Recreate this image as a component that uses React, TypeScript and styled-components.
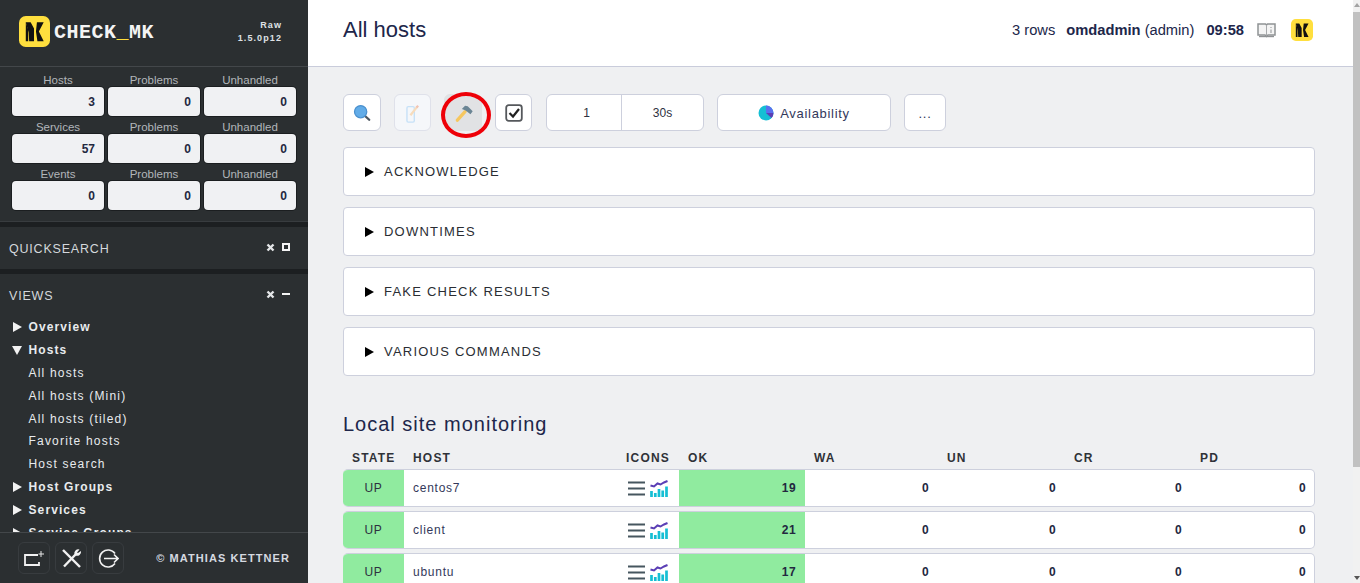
import React from "react"
import styled, { createGlobalStyle } from "styled-components"

const GlobalStyle = createGlobalStyle`
    html, body {
        margin: 0;
        height: 100%;
        overflow: hidden;
        font-family: "Liberation Sans", Arial, sans-serif;
    }
`

const Page = styled.div`
    display: flex;
    height: 100vh;
    overflow: hidden;
    background: #eff0f2;
`

/* sidebar */

const Sidebar = styled.aside`
    width: 308px;
    flex: none;
    display: flex;
    flex-direction: column;
    background: #2b2f31;
    color: #e6e8ea;
`

const LogoBar = styled.div`
    flex: none;
    display: flex;
    align-items: center;
    padding: 0 26px 3px 19px;
    box-sizing: border-box;
    height: 67px;
    border-bottom: 1px solid #43474a;
`

const LogoText = styled.div`
    margin-left: 4px;
    margin-top: 1px;
    font: bold 20px "Liberation Mono", monospace;
    letter-spacing: 0.5px;
    color: #f4f4f4;

    span {
        color: #ffdf3e;
    }
`

const Version = styled.div`
    margin-left: auto;
    text-align: right;
    font-size: 9px;
    font-weight: bold;
    letter-spacing: 1.1px;
    line-height: 13px;
    color: #dfe2e5;
`

const Stats = styled.div`
    display: grid;
    grid-template-columns: repeat(3, 92px);
    column-gap: 4px;
    padding: 2px 0 11px 12px;
    border-bottom: 1px solid #383c3f;
`

const StatCell = styled.div`
    text-align: center;
`

const StatLabel = styled.div`
    height: 18px;
    line-height: 22px;
    font-size: 11.5px;
    color: #b2b6ba;
`

const StatValue = styled.div`
    height: 29px;
    line-height: 31px;
    text-align: right;
    padding-right: 9px;
    background: #f0f1f3;
    border-radius: 4px;
    box-shadow: 0 0 0 1px #1b1e20;
    font-size: 12px;
    font-weight: bold;
    color: #23283f;
`

const Snapin = styled.div`
    flex: none;
    border-top: 5px solid #1c1f21;
`

const SnapinHead = styled.div`
    display: flex;
    align-items: center;
    justify-content: space-between;
    height: 42px;
    box-sizing: border-box;
    padding: 2px 18px 0 9px;
    font-size: 12.5px;
    letter-spacing: 0.8px;
    color: #d4d8dc;
`

const SnapinControls = styled.div`
    display: flex;
    align-items: center;
    gap: 7px;
    font-size: 0;
    margin-top: -4px;
`

const ViewsScroller = styled.div`
    flex: 1;
    min-height: 0;
    overflow: hidden;
    padding: 0 0 0 12px;
`

const NavItem = styled.div<{ $top?: boolean }>`
    display: flex;
    align-items: center;
    height: 22.8px;
    padding-left: ${p => (p.$top ? 0 : 16.5)}px;
    font-size: 12px;
    font-weight: ${p => (p.$top ? "bold" : "normal")};
    letter-spacing: ${p => (p.$top ? 1.1 : 1.2)}px;
    color: #e8ebee;
`

const Caret = styled.span<{ $open?: boolean }>`
    width: 0;
    height: 0;
    margin-right: 7px;
    ${p =>
        p.$open
            ? `
        border-left: 5px solid transparent;
        border-right: 5px solid transparent;
        border-top: 9px solid #f2f2f2;
        margin-right: 6.5px;
    `
            : `
        border-top: 5px solid transparent;
        border-bottom: 5px solid transparent;
        border-left: 9px solid #f2f2f2;
        margin-left: 1px;
        margin-right: 6.5px;
    `}
`

const SideFooter = styled.div`
    height: 50px;
    flex: none;
    display: flex;
    align-items: center;
    padding: 0 18px;
    border-top: 1px solid #43474a;
    background: #2b2f31;
`

const FooterButton = styled.div`
    width: 32px;
    height: 32px;
    box-sizing: border-box;
    display: flex;
    align-items: center;
    justify-content: center;
    margin-right: 5px;
    border: 1px solid #383c3f;
    border-radius: 6px;
`

const Copyright = styled.div`
    margin-left: auto;
    font-size: 11px;
    font-weight: bold;
    letter-spacing: 1.08px;
    color: #d5dae0;
`

/* main */

const Main = styled.main`
    flex: 1;
    min-width: 0;
    display: flex;
    flex-direction: column;
    overflow: hidden;
`

const Header = styled.header`
    height: 67px;
    box-sizing: border-box;
    flex: none;
    display: flex;
    align-items: center;
    padding: 0 40px 6px 35px;
    background: #fff;
    border-bottom: 1px solid #c9ccdb;
    color: #20264a;
`

const Title = styled.h1`
    margin: 0;
    font-size: 22px;
    font-weight: normal;
`

const HeaderInfo = styled.div<{ $gap: number; $push?: boolean }>`
    font-size: 14.7px;
    margin-left: ${p => (p.$push ? "auto" : `${p.$gap}px`)};

    b {
        font-weight: bold;
    }
`

const HeaderIcon = styled.div<{ $gap: number }>`
    display: flex;
    margin-left: ${p => p.$gap}px;
`

const Content = styled.div`
    padding: 27px 38px 0 35px;
`

const Toolbar = styled.div`
    display: flex;
    align-items: stretch;
    height: 37px;
    position: relative;
`

const ToolButton = styled.div<{ $width: number; $gap: number; $dim?: boolean; $pressed?: boolean }>`
    width: ${p => p.$width}px;
    margin-right: ${p => p.$gap}px;
    box-sizing: border-box;
    display: flex;
    align-items: center;
    justify-content: center;
    gap: 6px;
    background: ${p => (p.$pressed ? "#e1e2e4" : p.$dim ? "#f5f7fa" : "#fff")};
    border: 1px solid ${p => (p.$pressed ? "#e1e2e4" : p.$dim ? "#dfe1ea" : "#cdd0dd")};
    border-radius: 6px;
    font-size: 13px;
    letter-spacing: 0.7px;
    color: #33385a;
    padding-top: 1px;
`

const TimerGroup = styled.div`
    width: 158px;
    margin-right: 13px;
    box-sizing: border-box;
    display: flex;
    background: #fff;
    border: 1px solid #cdd0dd;
    border-radius: 6px;
    font-size: 12px;
    color: #2d3140;
`

const TimerCell = styled.div<{ $width: number; $nudge?: number }>`
    width: ${p => p.$width}px;
    box-sizing: border-box;
    padding-left: ${p => p.$nudge ?? 0}px;
    display: flex;
    align-items: center;
    justify-content: center;

    & + & {
        flex: 1;
        border-left: 1px solid #cdd0dd;
    }
`

const RedRing = styled.div`
    position: absolute;
    left: 98px;
    top: -2px;
    width: 50px;
    height: 46px;
    box-sizing: border-box;
    border: 4px solid #ee0008;
    border-radius: 50%;
`

const Accordions = styled.div`
    display: flex;
    flex-direction: column;
    gap: 11px;
    margin-top: 16px;
`

const Accordion = styled.div`
    height: 49px;
    box-sizing: border-box;
    display: flex;
    align-items: center;
    padding: 0 0 1px 21px;
    background: #fff;
    border: 1px solid #cdd0dd;
    border-radius: 4px;
    font-size: 13px;
    letter-spacing: 1.22px;
    color: #2a2d33;

    &::before {
        content: "";
        width: 0;
        height: 0;
        margin: 2px 10px 0 0;
        border-top: 5px solid transparent;
        border-bottom: 5px solid transparent;
        border-left: 9px solid #000;
    }
`

const SectionTitle = styled.h2`
    margin: 36px 0 0;
    height: 24px;
    line-height: 24px;
    font-size: 20px;
    font-weight: normal;
    letter-spacing: 1px;
    color: #20264a;
`

const columns = "61px 213px 62px 126px 133px 127px 126px 124px"

const TableHead = styled.div`
    display: grid;
    grid-template-columns: ${columns};
    margin-top: 11px;
    height: 22px;
    align-items: center;
    font-size: 12px;
    font-weight: bold;
    letter-spacing: 1.2px;
    color: #2f3238;

    span {
        padding-left: 9px;
    }
`

const Row = styled.div`
    display: grid;
    grid-template-columns: ${columns};
    height: 38px;
    margin-bottom: 4px;
    box-sizing: border-box;
    background: #fff;
    border: 1px solid #cdd0dd;
    border-left: none;
    border-radius: 5px;
    font-size: 12px;
    letter-spacing: 0.75px;
    color: #33385a;
    overflow: hidden;
`

const StateCell = styled.div`
    display: flex;
    align-items: center;
    justify-content: center;
    background: #90eb9f;
    margin: -1px 0;
    color: #2d3140;
`

const HostCell = styled.div`
    display: flex;
    align-items: center;
    padding-left: 9px;
`

const IconsCell = styled.div`
    display: flex;
    align-items: center;
    gap: 5px;
    padding-left: 11px;
`

const CountCell = styled.div<{ $ok?: boolean }>`
    display: flex;
    align-items: center;
    justify-content: flex-end;
    padding-right: 9px;
    font-weight: bold;
    letter-spacing: 0.4px;
    color: #23283f;
    ${p => p.$ok && "background: #90eb9f; margin: -1px 0;"}
`

/* fake browser scrollbar */

const ScrollTrack = styled.div`
    width: 7px;
    flex: none;
    display: flex;
    flex-direction: column;
    align-items: center;
    background: #f1f1f1;
`

const ScrollArrow = styled.div<{ $down?: boolean }>`
    width: 0;
    height: 0;
    margin: ${p => (p.$down ? "auto 0 3px" : "3px 0 3px")};
    border-left: 3.5px solid transparent;
    border-right: 3.5px solid transparent;
    ${p => (p.$down ? "border-top: 4px solid #555;" : "border-bottom: 4px solid #a3a3a3;")}
`

const ScrollThumb = styled.div`
    width: 100%;
    height: 455px;
    margin-top: 2px;
    background: #c1c1c1;
`

/* drawings */

const KLogo: React.FC<{ size: number }> = ({ size }) => (
    <svg width={size} height={size} viewBox="0 0 32 32">
        <rect width="32" height="32" rx="7" fill="#ffdf3e" />
        <path d="M7 6.5 H12 L15.5 13 V26 H10.5 L10 17 Z" fill="#111" />
        <path d="M7 6.5 L9.5 14 V26 H7 Z" fill="#111" />
        <path d="M18.5 6.5 H25.5 L20.5 16 L25.5 26 H19 L17.5 16 Z" fill="#111" />
    </svg>
)

const SearchIcon = () => (
    <svg width="18" height="18" viewBox="0 0 20 20">
        <path d="M12.5 12.5 L18 17.5" stroke="#4c5660" strokeWidth="2.6" strokeLinecap="round" />
        <circle cx="8.5" cy="8.5" r="6.8" fill="#62ace8" stroke="#4a90ce" strokeWidth="1.4" />
    </svg>
)

const EditIcon = () => (
    <svg width="14" height="19" viewBox="0 0 16 22">
        <rect x="1" y="3" width="8.5" height="18" rx="1.5" fill="none" stroke="#c6e1f7" strokeWidth="1.6" />
        <path d="M5 13 L13 3" stroke="#f7dcbc" strokeWidth="2.6" />
        <path d="M12 4 L14 2" stroke="#f1c2b2" strokeWidth="2.6" />
    </svg>
)

const HammerIcon = () => (
    <svg width="21.6" height="18" viewBox="-4 0 24 20">
        <path d="M2 18 L10.5 8.5" stroke="#f6c75f" strokeWidth="3.6" strokeLinecap="round" />
        <path d="M7 5.5 L10.5 2 L13.5 2.5 L19 8 L16.5 11.5 L13 8.5 L10.5 7 Z" fill="#6b8594" />
    </svg>
)

const CheckIcon = () => (
    <svg width="18" height="18" viewBox="0 0 18 18">
        <rect x="1.2" y="1.2" width="15.6" height="15.6" rx="2.5" fill="none" stroke="#55585c" strokeWidth="1.8" />
        <path d="M4.5 9 L8 12.5 L14 5" fill="none" stroke="#222" strokeWidth="2.2" />
    </svg>
)

const PieIcon = () => (
    <svg width="16" height="16" viewBox="0 0 16 16">
        <circle cx="8" cy="8" r="7.5" fill="#15bfd4" />
        <path d="M8 8 L8 0.5 A7.5 7.5 0 0 1 15.5 8 Z" fill="#5a70ee" />
        <path d="M8 8 L15.5 8 A7.5 7.5 0 0 1 13.5 13 Z" fill="#5b3fb5" />
    </svg>
)

const BookIcon = () => (
    <svg width="19" height="16" viewBox="0 0 19 16">
        <path d="M1 2 H8.5 L9.5 3 L10.5 2 H18 V13 H11 L9.5 14.5 L8 13 H1 Z" fill="#f4f4f4" stroke="#8f9294" strokeWidth="1.5" />
        <path d="M9.5 3 V13.5" stroke="#a7a9ab" />
        <path d="M14 5 V6 M14 7.5 V11" stroke="#8f9294" />
        <path d="M2 14.5 H17" stroke="#8f9294" strokeWidth="1.4" />
    </svg>
)

const ListIcon = () => (
    <svg width="17" height="15" viewBox="0 0 17 15">
        <path d="M0 1.5 H17 M0 7.5 H17 M0 13.5 H17" stroke="#46565f" strokeWidth="1.8" />
    </svg>
)

const GraphIcon = () => (
    <svg width="18" height="17" viewBox="0 0 18 17">
        <path d="M0.5 5.5 L4 6.5 L7.5 3.5 L10.5 4.5 L14 2.5 L17.5 1" fill="none" stroke="#5b3fb5" strokeWidth="2" />
        <path d="M1.5 11 V17 M5.3 13 V17 M9 9 V17 M12.7 10.5 V17 M16.5 6.5 V17" stroke="#15bfd4" strokeWidth="2.7" />
    </svg>
)

const CloseMark = () => (
    <svg width="9" height="9" viewBox="0 0 9 9">
        <path d="M1.5 1.5 L7.5 7.5 M7.5 1.5 L1.5 7.5" stroke="#e4e6e8" strokeWidth="2.4" />
    </svg>
)

const SquareMark = () => (
    <svg width="8" height="8" viewBox="0 0 8 8">
        <rect x="1" y="1" width="6" height="6" fill="none" stroke="#f4f4f4" strokeWidth="2" />
    </svg>
)

const MinusMark = () => (
    <svg width="8" height="8" viewBox="0 0 8 8">
        <rect y="3" width="8" height="2" fill="#f4f4f4" />
    </svg>
)

const AddSnapinIcon = () => (
    <svg width="21" height="17" viewBox="0 0 21 17">
        <path d="M14 5 H1 V15 H15 V12" fill="none" stroke="#f2f2f2" strokeWidth="1.8" />
        <path d="M17 1 V7 M14.5 4 H20" stroke="#e8e8e8" strokeWidth="1" />
    </svg>
)

const ToolsIcon = () => (
    <svg width="21" height="21" viewBox="0 0 21 21">
        <path d="M2 2 L19 19" stroke="#f2f2f2" strokeWidth="2.4" />
        <path d="M3 18.5 L15 6" stroke="#f2f2f2" strokeWidth="2.4" />
        <path d="M13.5 6.5 A4 4 0 0 1 18.5 1.5 L16 4.5 L17 5 L20 3 A4 4 0 0 1 14.5 7.5 Z" fill="#f2f2f2" />
    </svg>
)

const LogoutIcon = () => (
    <svg width="21" height="21" viewBox="0 0 21 21">
        <path d="M17 5.5 A8.5 8.5 0 1 0 17 15.5" fill="none" stroke="#f2f2f2" strokeWidth="1.6" />
        <path d="M6 10.5 H20 M16 6.5 L20 10.5 L16 14.5" fill="none" stroke="#f2f2f2" strokeWidth="1.6" />
    </svg>
)

const stats = [
    ["Hosts", "3"],
    ["Problems", "0"],
    ["Unhandled", "0"],
    ["Services", "57"],
    ["Problems", "0"],
    ["Unhandled", "0"],
    ["Events", "0"],
    ["Problems", "0"],
    ["Unhandled", "0"],
]

const nav: [string, "closed" | "open" | "child"][] = [
    ["Overview", "closed"],
    ["Hosts", "open"],
    ["All hosts", "child"],
    ["All hosts (Mini)", "child"],
    ["All hosts (tiled)", "child"],
    ["Favorite hosts", "child"],
    ["Host search", "child"],
    ["Host Groups", "closed"],
    ["Services", "closed"],
    ["Service Groups", "closed"],
]

const sections = ["ACKNOWLEDGE", "DOWNTIMES", "FAKE CHECK RESULTS", "VARIOUS COMMANDS"]

const hosts = [
    ["centos7", "19"],
    ["client", "21"],
    ["ubuntu", "17"],
]

const App: React.FC = () => (
    <Page>
        <GlobalStyle />
        <Sidebar>
            <LogoBar>
                <KLogo size={31} />
                <LogoText>
                    CHECK<span>_</span>MK
                </LogoText>
                <Version>
                    Raw
                    <br />
                    1.5.0p12
                </Version>
            </LogoBar>
            <Stats>
                {stats.map(([label, value], i) => (
                    <StatCell key={i}>
                        <StatLabel>{label}</StatLabel>
                        <StatValue>{value}</StatValue>
                    </StatCell>
                ))}
            </Stats>
            <Snapin>
                <SnapinHead>
                    QUICKSEARCH
                    <SnapinControls>
                        <CloseMark />
                        <SquareMark />
                    </SnapinControls>
                </SnapinHead>
            </Snapin>
            <Snapin>
                <SnapinHead>
                    VIEWS
                    <SnapinControls>
                        <CloseMark />
                        <MinusMark />
                    </SnapinControls>
                </SnapinHead>
            </Snapin>
            <ViewsScroller>
                {nav.map(([label, kind]) => (
                    <NavItem key={label} $top={kind !== "child"}>
                        {kind !== "child" && <Caret $open={kind === "open"} />}
                        {label}
                    </NavItem>
                ))}
            </ViewsScroller>
            <SideFooter>
                <FooterButton>
                    <AddSnapinIcon />
                </FooterButton>
                <FooterButton>
                    <ToolsIcon />
                </FooterButton>
                <FooterButton>
                    <LogoutIcon />
                </FooterButton>
                <Copyright>© MATHIAS KETTNER</Copyright>
            </SideFooter>
        </Sidebar>
        <Main>
            <Header>
                <Title>All hosts</Title>
                <HeaderInfo $gap={0} $push>
                    3 rows
                </HeaderInfo>
                <HeaderInfo $gap={11}>
                    <b>omdadmin</b> (admin)
                </HeaderInfo>
                <HeaderInfo $gap={12}>
                    <b>09:58</b>
                </HeaderInfo>
                <HeaderIcon $gap={13}>
                    <BookIcon />
                </HeaderIcon>
                <HeaderIcon $gap={15}>
                    <KLogo size={22} />
                </HeaderIcon>
            </Header>
            <Content>
                <Toolbar>
                    <ToolButton $width={38} $gap={13}>
                        <SearchIcon />
                    </ToolButton>
                    <ToolButton $width={37} $gap={13} $dim>
                        <EditIcon />
                    </ToolButton>
                    <ToolButton $width={38} $gap={13} $pressed>
                        <HammerIcon />
                    </ToolButton>
                    <ToolButton $width={37} $gap={14}>
                        <CheckIcon />
                    </ToolButton>
                    <TimerGroup>
                        <TimerCell $width={74} $nudge={5}>
                            1
                        </TimerCell>
                        <TimerCell $width={83}>30s</TimerCell>
                    </TimerGroup>
                    <ToolButton $width={174} $gap={13}>
                        <PieIcon />
                        Availability
                    </ToolButton>
                    <ToolButton $width={42} $gap={0}>
                        ...
                    </ToolButton>
                    <RedRing />
                </Toolbar>
                <Accordions>
                    {sections.map(s => (
                        <Accordion key={s}>{s}</Accordion>
                    ))}
                </Accordions>
                <SectionTitle>Local site monitoring</SectionTitle>
                <TableHead>
                    <span>STATE</span>
                    <span>HOST</span>
                    <span>ICONS</span>
                    <span>OK</span>
                    <span>WA</span>
                    <span>UN</span>
                    <span>CR</span>
                    <span>PD</span>
                </TableHead>
                {hosts.map(([name, ok]) => (
                    <Row key={name}>
                        <StateCell>UP</StateCell>
                        <HostCell>{name}</HostCell>
                        <IconsCell>
                            <ListIcon />
                            <GraphIcon />
                        </IconsCell>
                        <CountCell $ok>{ok}</CountCell>
                        <CountCell>0</CountCell>
                        <CountCell>0</CountCell>
                        <CountCell>0</CountCell>
                        <CountCell>0</CountCell>
                    </Row>
                ))}
            </Content>
        </Main>
        <ScrollTrack>
            <ScrollArrow />
            <ScrollThumb />
            <ScrollArrow $down />
        </ScrollTrack>
    </Page>
)

export default App
